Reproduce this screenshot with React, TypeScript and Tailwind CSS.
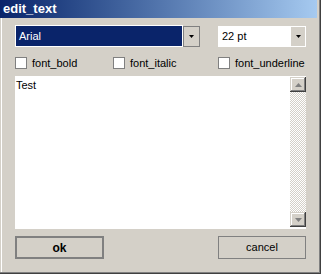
const Arrow = ({ color = '#000' }: { color?: string }) => (
  <svg width="7" height="4" viewBox="0 0 7 4">
    <path d="M0 0h7L3.5 4z" fill={color} />
  </svg>
);

const SmallArrow = () => (
  <svg width="5" height="3" viewBox="0 0 5 3">
    <path d="M0 0h5L2.5 3z" fill="#000" />
  </svg>
);

const Checkbox = ({ label, className }: { label: string; className: string }) => (
  <div className={`flex items-center ${className}`}>
    <div className="w-[12px] h-[12px] border border-[#808080] bg-white" />
    <span className="ml-[5px] text-[11px] leading-[12px] text-black">{label}</span>
  </div>
);

const ScrollButton = ({ up }: { up?: boolean }) => (
  <div className="w-[16px] h-[15px] bg-[#d4d0c8] flex items-center justify-center shadow-[inset_-1px_-1px_0_#404040,inset_1px_1px_0_#d4d0c8,inset_-2px_-2px_0_#808080,inset_2px_2px_0_#fff]">
    <div className={up ? 'rotate-180' : ''}>
      <Arrow color="#808080" />
    </div>
  </div>
);

export default function App() {
  return (
    <div className="w-[321px] h-[274px] bg-[#d4d0c8] flex flex-col font-['Liberation_Sans',Arial,sans-serif] shadow-[inset_-1px_-1px_0_#404040,inset_-2px_-2px_0_#808080,inset_1px_0_0_#d4d0c8,inset_2px_0_0_#fff]">
      <div className="w-[317px] h-[18px] shrink-0 bg-linear-to-r from-[#0a246a] to-[#a6caf0] flex items-center pl-[3px]">
        <span className="text-white font-bold text-[13px] leading-[18px]">edit_text</span>
      </div>

      <div className="px-[15px] flex flex-col">
        <div className="flex mt-[7px] h-[22px]">
          <div className="w-[168px] h-[22px] border border-white bg-[#0a246a] flex items-center pl-[3px]">
            <span className="text-white text-[11px]">Arial</span>
          </div>
          <div className="w-[17px] h-[21px] mt-[1px] border border-[#808080] bg-[#d4d0c8] flex items-center justify-center">
            <SmallArrow />
          </div>
          <div className="ml-[18px] w-[88px] h-[21px] mt-[1px] bg-white p-[1px] flex justify-between">
            <span className="text-[11px] leading-[19px] pl-[3px] text-black">22 pt</span>
            <div className="w-[14px] h-full bg-[#d4d0c8] flex items-center justify-center">
              <SmallArrow />
            </div>
          </div>
        </div>

        <div className="flex mt-[10px] h-[12px]">
          <Checkbox label="font_bold" className="w-[98px]" />
          <Checkbox label="font_italic" className="w-[105px]" />
          <Checkbox label="font_underline" className="flex-1" />
        </div>

        <div className="mt-[7px] h-[153px] bg-white flex">
          <div className="flex-1 pl-[1px] pt-[3px] text-[11px] leading-[13px] text-black">Test</div>
          <div className="w-[16px] flex flex-col pt-[1px] pb-[2px]">
            <ScrollButton up />
            <div className="flex-1 bg-[repeating-conic-gradient(#d4d0c8_0%_25%,#fff_0%_50%)] bg-size-[2px_2px]" />
            <ScrollButton />
          </div>
        </div>

        <div className="flex justify-between mt-[7px]">
          <div className="w-[89px] h-[23px] border-2 border-[#808080] flex items-center justify-center">
            <span className="font-bold text-[12px] text-black">ok</span>
          </div>
          <div className="w-[88px] h-[23px] border border-[#808080] flex items-center justify-center">
            <span className="text-[11px] text-black">cancel</span>
          </div>
        </div>
      </div>
    </div>
  );
}
